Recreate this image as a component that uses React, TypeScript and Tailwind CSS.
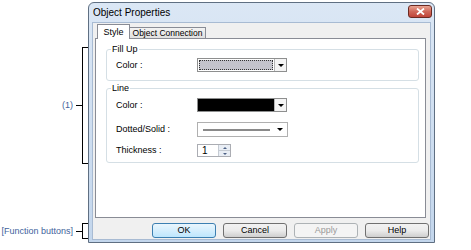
import React from 'react';

const ui = "font-['Liberation_Sans',Arial,sans-serif]";

function Bracket({ label, height, className }: { label: string; height: string; className: string }) {
  return (
    <div className={`flex items-center justify-end ${height} ${className}`}>
      <span className="mr-[3px] whitespace-nowrap text-[9px] leading-none text-[#42639c]">{label}</span>
      <div className="w-[6px] h-px bg-black shrink-0" />
      <div className="w-[6px] h-full shrink-0 border border-r-0 border-black" />
    </div>
  );
}

function Arrow() {
  return <div className="w-0 h-0 border-x-[3px] border-x-transparent border-t-[3px] border-t-black" />;
}

function ColorCombo({ fill }: { fill: 'none' | 'black' }) {
  return (
    <div className="flex w-[90px] h-[14px] border border-[#8e8f8f] bg-white">
      {fill === 'none' ? (
        <div className="flex-1 m-px border border-dotted border-[#333] bg-[#c4c4cc]" />
      ) : (
        <div className="flex-1 bg-black" />
      )}
      <div className="w-[12px] flex items-center justify-center border-l border-[#b5b5b5] bg-[#f4f4f4]">
        <Arrow />
      </div>
    </div>
  );
}

function LineCombo() {
  return (
    <div className="flex items-center w-[91px] h-[15px] border border-[#b0b0b0] bg-white">
      <div className="ml-[5px] w-[67px] h-[2px] bg-[#8a8a8a]" />
      <div className="ml-auto mr-[4px]">
        <Arrow />
      </div>
    </div>
  );
}

function Spinner() {
  return (
    <div className="flex items-center w-[34px] h-[13px] border border-[#abadb3] bg-white">
      <span className="pl-[4px] text-[10px] leading-none text-black">1</span>
      <div className="ml-auto w-[12px] h-full flex flex-col border-l border-[#c5cbd3] bg-[#e9eef5]">
        <div className="flex-1 flex items-center justify-center border-b border-[#c5cbd3]">
          <div className="w-0 h-0 border-x-[2px] border-x-transparent border-b-[2px] border-b-[#4d6185]" />
        </div>
        <div className="flex-1 flex items-center justify-center">
          <div className="w-0 h-0 border-x-[2px] border-x-transparent border-t-[2px] border-t-[#4d6185]" />
        </div>
      </div>
    </div>
  );
}

function Row({ label, children, className = '' }: { label: string; children: React.ReactNode; className?: string }) {
  return (
    <div className={`flex items-center pl-[9px] ${className}`}>
      <span className="w-[81px] whitespace-nowrap text-[9px] leading-none text-black">{label}</span>
      {children}
    </div>
  );
}

function Button({ label, kind }: { label: string; kind: 'default' | 'normal' | 'disabled' }) {
  const styles = {
    default: 'border-[#3c7fb1] bg-gradient-to-b from-[#eaf6fd] to-[#bee6fd] text-black',
    normal: 'border-[#707070] bg-gradient-to-b from-[#f2f2f2] via-[#ebebeb] to-[#cfcfcf] text-black',
    disabled: 'border-[#adb2b5] bg-[#f4f4f4] text-[#9a9a9a]',
  }[kind];
  return (
    <div className={`w-[64px] h-[15px] flex items-center justify-center rounded-[3px] border text-[9px] leading-none ${styles}`}>
      {label}
    </div>
  );
}

export default function App() {
  return (
    <div className={`w-[471px] h-[250px] bg-white flex items-start ${ui}`}>
      {/* Annotations */}
      <div className="w-[88px] flex flex-col shrink-0">
        <Bracket label="(1)" height="h-[117px]" className="mt-[47px]" />
        <Bracket label="[Function buttons]" height="h-[16px]" className="mt-[59px]" />
      </div>

      {/* Dialog */}
      <div className="mt-[2px] w-[347px] h-[241px] flex flex-col rounded-t-[6px] border border-[#5f6f82] bg-gradient-to-b from-[#dbe7f5] to-[#c3d6ec]">
        <div className="h-[19px] flex items-start">
          <span className="ml-[4px] mt-[4px] whitespace-nowrap text-[10px] leading-[12px] text-black">Object Properties</span>
          <div className="ml-auto mr-[2px] mt-[2px] w-[24px] h-[13px] rounded-[3px] border border-[#6b2a22] bg-gradient-to-b from-[#e8a493] via-[#d0685a] to-[#c0453a] flex items-center justify-center">
            <svg width="9" height="7" viewBox="0 0 9 7">
              <path d="M1 0.5 L8 6.5 M8 0.5 L1 6.5" stroke="white" strokeWidth="1.8" />
            </svg>
          </div>
        </div>

        <div className="flex-1 mx-[3px] mb-[2px] flex flex-col border border-[#a8bbd3] bg-[#f0f0f0] pl-[2px] pr-[1px] pt-[1px]">
          {/* Tabs */}
          <div className="h-[14px] flex items-end pl-[2px] mr-[3px]">
            <div className="relative z-10 -mb-px h-[15px] w-[33px] flex items-center justify-center border border-b-0 border-[#898c95] bg-white text-[9px] leading-none text-black">
              Style
            </div>
            <div className="h-[11px] w-[76px] flex items-center justify-center whitespace-nowrap border border-b-0 border-l-0 border-[#898c95] bg-gradient-to-b from-[#f3f3f3] to-[#e0e0e0] text-[8.5px] leading-none text-black">
              Object Connection
            </div>
          </div>

          {/* Panel */}
          <div className="h-[180px] mr-[3px] border border-[#898c95] bg-white pl-[10px] pr-[6px] pt-[4px]">
            <fieldset className="border border-[#d5dfe5] rounded-[3px] pt-[3px] pb-[8px]">
              <legend className="ml-[4px] px-[1px] text-[9px] leading-[12px] text-black">Fill Up</legend>
              <Row label="Color :">
                <ColorCombo fill="none" />
              </Row>
            </fieldset>
            <fieldset className="mt-[1px] border border-[#d5dfe5] rounded-[3px] pt-[4px] pb-[5px]">
              <legend className="ml-[4px] px-[1px] text-[9px] leading-[12px] text-black">Line</legend>
              <Row label="Color :">
                <ColorCombo fill="black" />
              </Row>
              <Row label="Dotted/Solid :" className="mt-[10px]">
                <LineCombo />
              </Row>
              <Row label="Thickness :" className="mt-[7px]">
                <Spinner />
              </Row>
            </fieldset>
          </div>

          {/* Function buttons */}
          <div className="mt-[5px] flex justify-end gap-[7px]">
            <Button label="OK" kind="default" />
            <Button label="Cancel" kind="normal" />
            <Button label="Apply" kind="disabled" />
            <Button label="Help" kind="normal" />
          </div>
        </div>
      </div>
    </div>
  );
}
